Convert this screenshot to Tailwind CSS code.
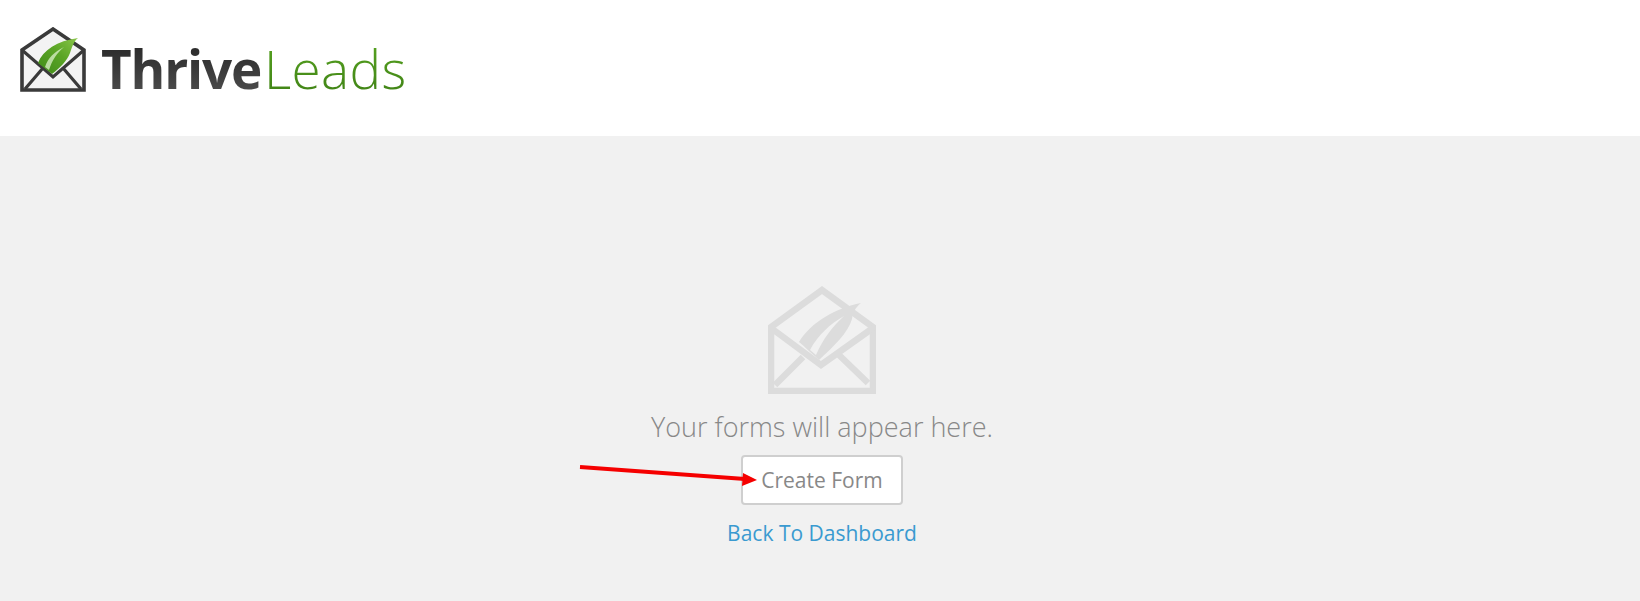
<!DOCTYPE html>
<html><head><meta charset="utf-8"><script src="https://cdn.jsdelivr.net/npm/@tailwindcss/browser@4"></script></head>
<body class="bg-[#f1f1f1] font-['Open_Sans',sans-serif] overflow-hidden">
<div class="relative h-[601px] w-[1640px]">
<header class="h-[136px] bg-white flex items-start pl-[20px] pt-[27px]">
  <svg width="66" height="66" viewBox="0 0 66 66" class="shrink-0 blur-[0.5px]">
    <defs><linearGradient id="g" x1="0" y1="1" x2="1" y2="0"><stop offset="0" stop-color="#3f8a18"/><stop offset=".55" stop-color="#5ba526"/><stop offset="1" stop-color="#8ac64a"/></linearGradient></defs>
    <path d="M2 63V23L33 2 64 23V63Z" fill="#f3f3f3" stroke="#3a3a3a" stroke-width="3.6"/>
    <path d="M2 23 33 50 64 23M5 62 23 41M61 62 43 41" fill="none" stroke="#3a3a3a" stroke-width="3.2"/>
    <path d="M18 36C23 23 37 14 58 11 53 15 52 21 50 26 47 34 40 41 32 47Z" fill="url(#g)"/>
    <path d="M25 40C28 31 34 25 44 20 37 26 32 33 29 43Z" fill="#d5ecc0" opacity=".8"/>
  </svg>
  <div class="ml-[15px] mt-[6px] text-[53px] leading-[72px] tracking-[-1.2px] blur-[0.5px] flex">
    <span class="font-bold bg-linear-to-b from-[#222] to-[#555] bg-clip-text text-transparent">Thrive</span><span class="ml-[3px] font-light tracking-[0.4px] bg-linear-to-b from-[#5aa822] to-[#3c7d14] bg-clip-text text-transparent">Leads</span>
  </div>
</header>
<main class="flex flex-col items-center pl-[4px] pt-[150px]">
  <svg width="108" height="108" viewBox="0 0 108 108" class="blur-[0.5px]">
    <path d="M3 105V41L54 4 105 41V105Z" fill="none" stroke="#dcdcdc" stroke-width="6.5"/>
    <path d="M3 42 53 79 105 42M7 99 35 71M100 97 71 69" fill="none" stroke="#dcdcdc" stroke-width="6.5"/>
    <path d="M31 56C43 36 68 22 93 17 87 22 85 26 84 33 80 47 66 60 51 74 44 68 37 61 31 56Z" fill="#dcdcdc"/>
    <path d="M42 64C50 49 62 38 76 30 64 41 55 53 48 69Z" fill="#f1f1f1"/>
  </svg>
  <p class="mt-[14px] text-[27px] leading-[38px] font-light text-[#888]">Your forms will appear here.</p>
  <button class="mt-[9px] w-[162px] h-[50px] pt-[1px] bg-white border-2 border-[#cfcfcf] rounded-[4px] text-[21px] text-[#888]">Create Form</button>
  <a class="mt-[14px] text-[21px] leading-[28px] text-[#3a9ad0]" href="#">Back To Dashboard</a>
</main>
<svg class="absolute left-0 top-0 pointer-events-none" width="1640" height="601">
  <path d="M580 467 745 479" stroke="#f50000" stroke-width="4" fill="none"/>
  <path d="M757 480 743 473 742 486Z" fill="#f50000"/>
</svg>
</div>
</body></html>
